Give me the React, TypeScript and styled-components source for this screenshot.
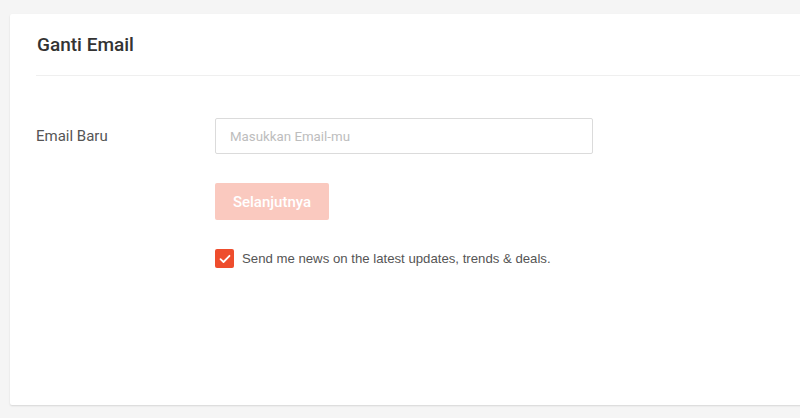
import React from "react";
import styled, { createGlobalStyle } from "styled-components";

const GlobalStyle = createGlobalStyle`
  body {
    margin: 0;
    background: #f5f5f5;
    font-family: Roboto, "Liberation Sans", sans-serif;
  }
`;

const Page = styled.div`
  padding: 14px 0 0 10px;
  height: 418px;
  box-sizing: border-box;
  overflow: hidden;
`;

const Card = styled.div`
  width: 1000px;
  height: 391px;
  background: #fff;
  box-shadow: 0 1px 2px rgba(0, 0, 0, 0.13);
  border-radius: 2px;
  padding: 0 0 0 26px;
  box-sizing: border-box;
`;

const Header = styled.div`
  padding: 18px 0 18px 1px;
  border-bottom: 1px solid #efefef;
`;

const Title = styled.h1`
  margin: 0;
  font-size: 19px;
  line-height: 25px;
  font-weight: 500;
  color: #333;
`;

const Form = styled.div`
  padding-top: 42px;
  display: flex;
  flex-direction: column;
`;

const Row = styled.div<{ $gap?: number }>`
  display: flex;
  align-items: center;
  margin-bottom: ${(p) => p.$gap ?? 0}px;
`;

const Label = styled.label`
  width: 179px;
  flex: none;
  font-size: 15px;
  color: #555;
`;

const Field = styled.div<{ $gap?: number }>`
  margin-left: 179px;
  margin-bottom: ${(p) => p.$gap ?? 0}px;
`;

const Input = styled.input`
  width: 378px;
  height: 36px;
  box-sizing: border-box;
  border: 1px solid #dbdbdb;
  border-radius: 2px;
  padding: 0 14px;
  font-family: Roboto, "Liberation Sans", sans-serif;
  font-size: 13.3px;
  color: #333;
  outline: none;
  &::placeholder {
    color: #bdbdbd;
  }
`;

const Button = styled.button`
  width: 114px;
  height: 37px;
  border: 0;
  border-radius: 2px;
  background: #fac9bf;
  color: #fff;
  font-family: Roboto, "Liberation Sans", sans-serif;
  font-size: 15px;
  font-weight: 500;
  cursor: not-allowed;
`;

const CheckRow = styled.label`
  display: flex;
  align-items: center;
  gap: 8px;
  font-family: "Liberation Sans", Arial, sans-serif;
  font-size: 13.2px;
  color: #555;
`;

const Box = styled.span`
  width: 19px;
  height: 19px;
  border-radius: 2px;
  background: #ee4d2d;
  display: flex;
  align-items: center;
  justify-content: center;
`;

export default function App() {
  return (
    <>
      <GlobalStyle />
      <Page>
        <Card>
          <Header>
            <Title>Ganti Email</Title>
          </Header>
          <Form>
            <Row $gap={29}>
              <Label>Email Baru</Label>
              <Input placeholder="Masukkan Email-mu" />
            </Row>
            <Field $gap={29}>
              <Button>Selanjutnya</Button>
            </Field>
            <Field>
              <CheckRow>
                <Box>
                  <svg width="12" height="10" viewBox="0 0 12 10">
                    <path d="M1.5 5.2 4.5 8 10.5 1.8" fill="none" stroke="#fff" strokeWidth="1.8" strokeLinecap="round" strokeLinejoin="round" />
                  </svg>
                </Box>
                Send me news on the latest updates, trends &amp; deals.
              </CheckRow>
            </Field>
          </Form>
        </Card>
      </Page>
    </>
  );
}
